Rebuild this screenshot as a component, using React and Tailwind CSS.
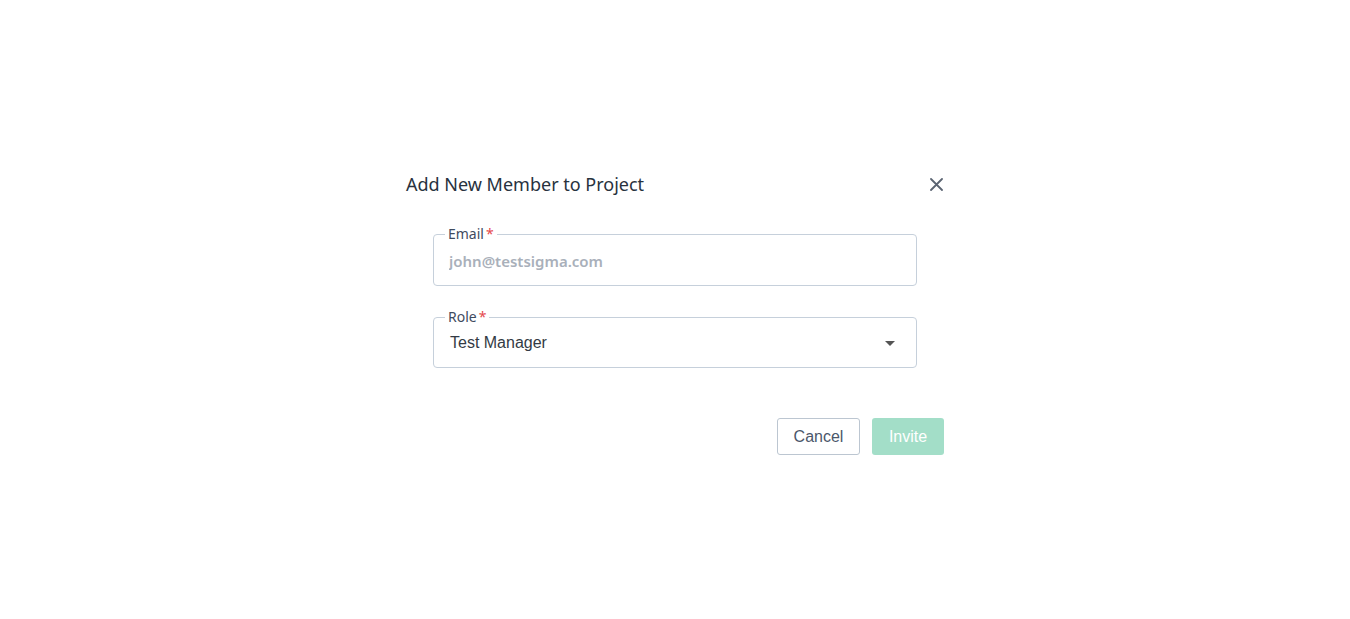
import { useState } from 'react'

export default function App() {
  const [email, setEmail] = useState('')

  return (
    <div className="h-[619px] w-full bg-white pt-[172px]">
      <div className="mx-auto w-[538px]">
        {/* Header */}
        <div className="flex h-[24px] items-center justify-between">
          <h1 className="font-['Noto_Sans',sans-serif] text-[18px] leading-[24px] text-[#28323e]">
            Add New Member to Project
          </h1>
          <button className="flex h-[16px] w-[16px] items-center justify-center text-[#5b6472]">
            <svg width="13" height="13" viewBox="0 0 13 13" fill="none" stroke="currentColor" strokeWidth="1.8" strokeLinecap="round">
              <path d="M1 1L12 12M12 1L1 12" />
            </svg>
          </button>
        </div>

        {/* Form */}
        <div className="mt-[30px] px-[27px]">
          {/* Email */}
          <fieldset className="rounded-[4px] border border-[#c6d0db]">
            <legend className="ml-[11px] px-[3px] font-['Noto_Sans',sans-serif] text-[14px] leading-[16px] text-[#3f4b5f]">
              Email<span className="ml-[2px] text-[#e5484d]">*</span>
            </legend>
            <div className="flex h-[43px] items-center pb-[5px]">
              <input
                type="email"
                value={email}
                onChange={(e) => setEmail(e.target.value)}
                placeholder="john@testsigma.com"
                className="w-full bg-transparent pl-[15px] pr-4 font-['Noto_Sans',sans-serif] text-[15px] font-semibold text-[#333] outline-none placeholder:text-[#a9b0ba]"
              />
            </div>
          </fieldset>

          {/* Role */}
          <fieldset className="mt-[23px] rounded-[4px] border border-[#c6d0db]">
            <legend className="ml-[11px] px-[3px] font-['Noto_Sans',sans-serif] text-[14px] leading-[16px] text-[#3f4b5f]">
              Role<span className="ml-[2px] text-[#e5484d]">*</span>
            </legend>
            <div className="flex h-[42px] items-center justify-between pb-[6px] pl-[16px] pr-[21px]">
              <span className="font-['Liberation_Sans',sans-serif] text-[16px] text-[#333a44]">Test Manager</span>
              <svg width="10" height="5" viewBox="0 0 10 5" fill="#555">
                <path d="M0 0H10L5 5Z" />
              </svg>
            </div>
          </fieldset>
        </div>

        {/* Actions */}
        <div className="mt-[50px] flex justify-end gap-[12px]">
          <button className="h-[37px] w-[83px] rounded-[3px] border border-[#bcc6d1] bg-white font-['Liberation_Sans',sans-serif] text-[16px] text-[#4b576b]">
            Cancel
          </button>
          <button
            disabled
            className="h-[37px] w-[72px] rounded-[3px] bg-[#a3dec8] font-['Liberation_Sans',sans-serif] text-[16px] text-white"
          >
            Invite
          </button>
        </div>
      </div>
    </div>
  )
}
